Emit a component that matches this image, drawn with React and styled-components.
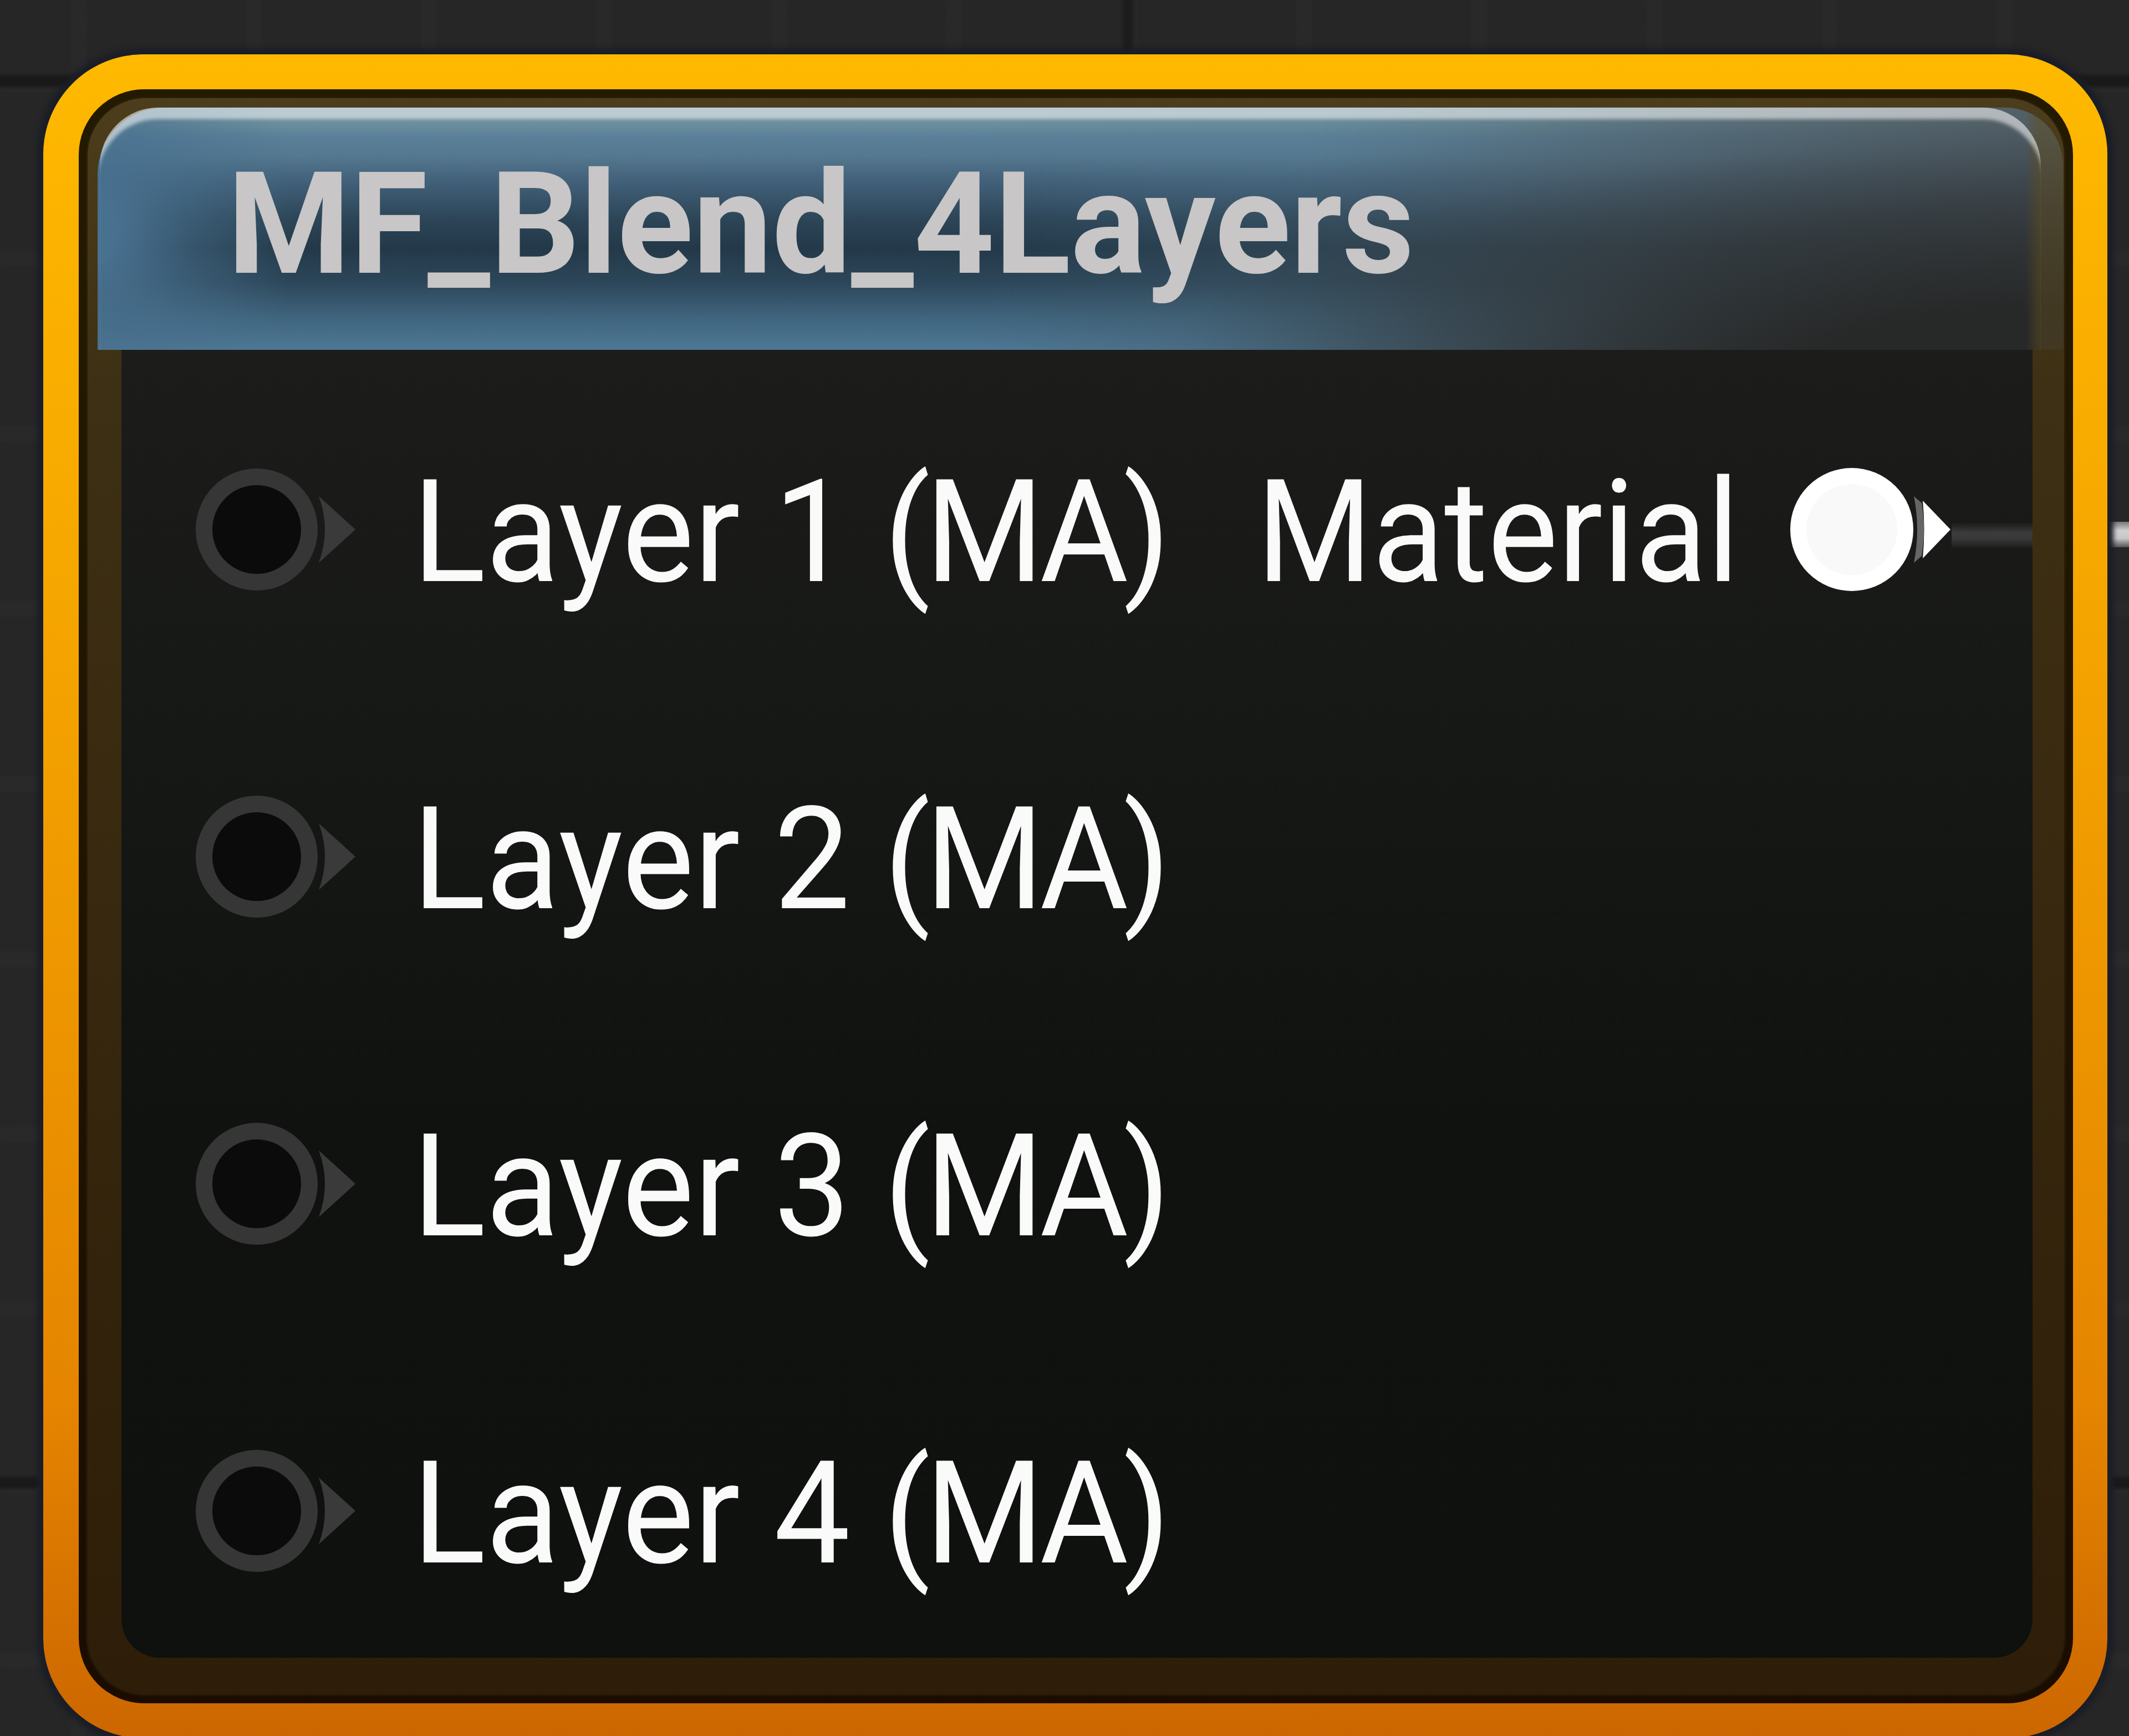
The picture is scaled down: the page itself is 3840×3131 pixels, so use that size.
import styled, { createGlobalStyle, css } from 'styled-components';

const inputs = [
  { name: 'Layer 1', type: '(MA)' },
  { name: 'Layer 2', type: '(MA)' },
  { name: 'Layer 3', type: '(MA)' },
  { name: 'Layer 4', type: '(MA)' },
];
const outputs = [{ name: 'Material' }];

const GlobalStyle = createGlobalStyle`
  body {
    margin: 0;
    background-color: #262626;
  }
`;

const Canvas = styled.main`
  position: relative;
  box-sizing: border-box;
  width: 3840px;
  height: 3131px;
  padding: 98px 39px 0 78px;
  overflow: hidden;
  font-family: Roboto, sans-serif;
  background-color: #262626;
  background-image:
    linear-gradient(90deg, transparent 4px, #1c1c1c 14px, #1c1c1c 24px, transparent 34px),
    linear-gradient(transparent 4px, #191919 14px, #191919 26px, transparent 36px),
    linear-gradient(90deg, transparent, #292929 8px, #292929 28px, transparent 36px),
    linear-gradient(transparent, #292929 8px, #292929 28px, transparent 36px);
  background-size: 2527px 100%, 100% 2528px, 315.8px 100%, 100% 316px;
  background-position: 2015px 0, 0 126px, 124px 0, 0 132px;
`;

const Node = styled.section`
  position: relative;
  box-sizing: border-box;
  height: 3037px;
  padding: 63px 62px 63px 64px;
  border-radius: 180px;
  background: linear-gradient(#ffb900, #f7a900 27%, #e58500 80%, #cc6600);
  box-shadow: 0 0 8px 11px #1b1e28;
`;

const Inner = styled.div`
  box-sizing: border-box;
  height: 100%;
  padding: 16px;
  border-radius: 118px;
  background: linear-gradient(#241a00, #1a0d00);
`;

const Frame = styled.div`
  box-sizing: border-box;
  height: 100%;
  display: flex;
  flex-direction: column;
  padding-top: 17px;
  border-radius: 104px;
  background: linear-gradient(#4c3d1c, #3e3014 18%, #2e1d08);
  box-shadow: 0 0 5px 1px #33260f;
`;

const Header = styled.header`
  position: relative;
  flex: none;
  box-sizing: border-box;
  height: 437px;
  margin: 0 2px 0 18px;
  padding: 61px 0 0 234px;
  border-radius: 120px 104px 0 0;
  background:
    linear-gradient(90deg, transparent 98.1%, rgba(96, 76, 28, 0.45) 98.7%),
    radial-gradient(ellipse 56% 122% at 100% 112%, #272828 24%, rgba(40, 42, 42, 0.85) 38%, rgba(42, 44, 45, 0.52) 60%, rgba(48, 50, 52, 0.14) 82%, transparent),
    linear-gradient(90deg, transparent 62%, rgba(76, 77, 78, 0.65)),
    linear-gradient(90deg, transparent 45%, rgba(88, 122, 142, 0.42) 78%),
    radial-gradient(ellipse 10% 130% at 0% 50%, #48708f 10%, rgba(72, 112, 142, 0.55) 45%, transparent),
    linear-gradient(#6b8e9b 7%, #5a8099 12%, #54788f 20%, #42617a 30%, #2c4557 46%, #233949 58%, #2c4659 72%, #40657e 87%, #4e7895);

  &::after {
    content: '';
    position: absolute;
    inset: 0 40px 0 4px;
    border-radius: 105px 105px 0 0;
    box-shadow: inset 0 25px 6px -4px rgba(255, 255, 255, 0.55);
  }
`;

const Title = styled.h1`
  margin: 0;
  color: #c8c6c6;
  font-size: 256px;
  font-weight: 700;
  line-height: 300px;
  white-space: nowrap;
  transform: scaleX(0.991);
  transform-origin: left;
`;

const Body = styled.div`
  flex: 1;
  display: flex;
  justify-content: space-between;
  margin: 0 57px 66px 61px;
  padding: 212px 146px 0 132px;
  border-radius: 0 0 70px 70px;
  background: linear-gradient(#1c1c1b, #171916 25%, #10120f 60%, #0e110e);
`;

const PinList = styled.div`
  flex: none;
  display: flex;
  flex-direction: column;
  gap: 366px;
`;

const PinRow = styled.div`
  position: relative;
  display: flex;
  align-items: center;
  gap: ${({ $output }) => ($output ? 91 : 101)}px;
  height: 224px;
`;

/* The condensed label keeps its full layout width, so inputs give the excess back */
const PinLabel = styled.span`
  margin-right: ${({ $output }) => ($output ? 0 : -60)}px;
  padding-top: 10px;
  color: #fafafa;
  font-size: 258px;
  line-height: 224px;
  white-space: nowrap;
  transform: scaleX(${({ $output }) => ($output ? 0.926 : 0.95)});
  transform-origin: ${({ $output }) => ($output ? 'right' : 'left')};
`;

const PinType = styled.span`
  letter-spacing: -10px;
`;

const PinIcon = styled.svg`
  display: block;
  width: 292px;
  height: 224px;
`;

const Wire = styled.i`
  position: absolute;
  height: 46px;
  ${({ $inside }) =>
    $inside
      ? css`
          top: 100px;
          left: 100%;
          width: 146px;
          background: linear-gradient(#1c1d1b, #3b3c3b 40%, #353635 65%, #1c1d1b);
        `
      : css`
          top: 941px;
          right: 0;
          width: 36px;
          background: linear-gradient(#777, #d0d0d0 35%, #c8c8c8 65%, #555);
        `}
`;

function Pin({ connected }) {
  if (connected) {
    return (
      <PinIcon viewBox="0 0 292 224">
        <circle cx="112" cy="112" r="111" fill="#fff" />
        <circle cx="112" cy="112" r="82" fill="#f9f9f9" />
        <path d="M224 52 Q236 112 224 172 L238 160 Q246 112 238 64Z" fill="#666" />
        <path d="M240 60 L290 112 L240 164 Q245 112 240 60Z" fill="#fff" />
      </PinIcon>
    );
  }
  return (
    <PinIcon viewBox="0 0 292 224">
      <circle cx="112" cy="112" r="95" fill="#0b0b0b" stroke="#363636" strokeWidth="30" />
      <path d="M224 52 L290 112 L224 172 Q246 112 224 52Z" fill="#3a3a3a" />
    </PinIcon>
  );
}

function App() {
  return (
    <>
      <GlobalStyle />
      <Canvas>
        <Wire />
        <Node>
          <Inner>
            <Frame>
              <Header>
                <Title>MF_Blend_4Layers</Title>
              </Header>
              <Body>
                <PinList>
                  {inputs.map(({ name, type }) => (
                    <PinRow key={name}>
                      <Pin />
                      <PinLabel>
                        {name} <PinType>{type}</PinType>
                      </PinLabel>
                    </PinRow>
                  ))}
                </PinList>
                <PinList>
                  {outputs.map(({ name }) => (
                    <PinRow key={name} $output>
                      <PinLabel $output>{name}</PinLabel>
                      <Pin connected />
                      <Wire $inside />
                    </PinRow>
                  ))}
                </PinList>
              </Body>
            </Frame>
          </Inner>
        </Node>
      </Canvas>
    </>
  );
}

export default App;
